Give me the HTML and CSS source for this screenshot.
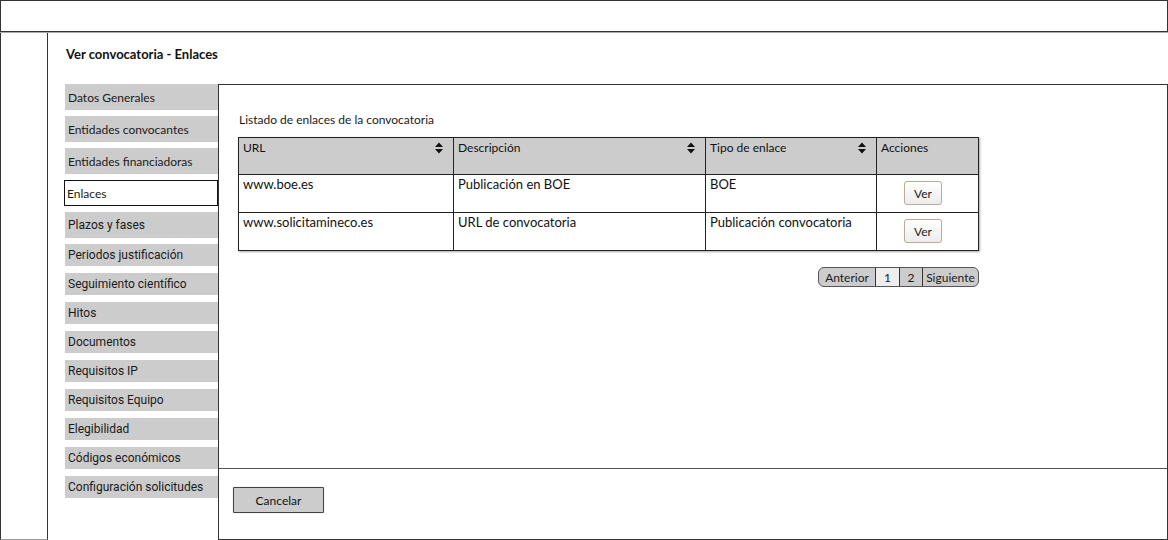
FILE: index.html
```html
<!DOCTYPE html>
<html lang="es">
<head>
<meta charset="utf-8">
<title>Ver convocatoria - Enlaces</title>
<link rel="stylesheet" href="styles.css">
</head>
<body>
<div class="topbar"></div>
<div class="shell">
  <div class="rail"></div>
  <div class="main">
    <div class="title">Ver convocatoria - Enlaces</div>
    <div class="workarea">
      <nav class="nav">
        <div class="nav-group tall">
          <div class="nav-item lato">Datos Generales</div>
          <div class="nav-item lato">Entidades convocantes</div>
          <div class="nav-item lato">Entidades financiadoras</div>
          <div class="nav-item lato active">Enlaces</div>
          <div class="nav-item">Plazos y fases</div>
        </div>
        <div class="nav-group short">
          <div class="nav-item">Periodos justificación</div>
          <div class="nav-item">Seguimiento científico</div>
          <div class="nav-item">Hitos</div>
          <div class="nav-item">Documentos</div>
          <div class="nav-item">Requisitos IP</div>
          <div class="nav-item">Requisitos Equipo</div>
          <div class="nav-item">Elegibilidad</div>
          <div class="nav-item">Códigos económicos</div>
          <div class="nav-item">Configuración solicitudes</div>
        </div>
      </nav>
      <section class="panel">
        <div class="panel-body">
          <div class="list-label">Listado de enlaces de la convocatoria</div>
          <table class="grid">
            <colgroup>
              <col class="c1"><col class="c2"><col class="c3"><col class="c4">
            </colgroup>
            <thead>
              <tr>
                <th><div class="th-in"><span>URL</span><svg class="sort" viewBox="0 0 10 12" width="10" height="12"><path d="M1 5 L5 0.5 L9 5 Z M1 7 L5 11.5 L9 7 Z"/></svg></div></th>
                <th><div class="th-in"><span>Descripción</span><svg class="sort" viewBox="0 0 10 12" width="10" height="12"><path d="M1 5 L5 0.5 L9 5 Z M1 7 L5 11.5 L9 7 Z"/></svg></div></th>
                <th><div class="th-in"><span>Tipo de enlace</span><svg class="sort" viewBox="0 0 10 12" width="10" height="12"><path d="M1 5 L5 0.5 L9 5 Z M1 7 L5 11.5 L9 7 Z"/></svg></div></th>
                <th><div class="th-in"><span>Acciones</span></div></th>
              </tr>
            </thead>
            <tbody>
              <tr>
                <td>www.boe.es</td>
                <td>Publicación en BOE</td>
                <td>BOE</td>
                <td class="act"><button class="ver">Ver</button></td>
              </tr>
              <tr>
                <td>www.solicitamineco.es</td>
                <td>URL de convocatoria</td>
                <td>Publicación convocatoria</td>
                <td class="act"><button class="ver">Ver</button></td>
              </tr>
            </tbody>
          </table>
          <div class="pager-row">
            <div class="pager">
              <span class="pg prev">Anterior</span>
              <span class="pg num current">1</span>
              <span class="pg num two">2</span>
              <span class="pg next">Siguiente</span>
            </div>
          </div>
        </div>
        <div class="panel-foot">
          <button class="cancel">Cancelar</button>
        </div>
      </section>
    </div>
  </div>
</div>
</body>
</html>
```
FILE: styles.css
```css
html, body {
  margin: 0;
  padding: 0;
  background: #fff;
}
body {
  width: 1168px;
  height: 540px;
  overflow: hidden;
  font-family: Lato, "Liberation Sans", sans-serif;
  color: #111;
}
.topbar {
  height: 32px;
  box-sizing: border-box;
  border: 1px solid #333;
}
.shell {
  display: flex;
  height: 508px;
  border-top: 1px solid #aaa;
  box-sizing: border-box;
}
.rail {
  width: 48px;
  box-sizing: border-box;
  border-left: 1px solid #333;
  border-right: 1px solid #333;
  border-bottom: 1px solid #999;
}
.main {
  flex: 1;
  display: flex;
  flex-direction: column;
  padding-left: 17px;
}
.title {
  font-weight: 700;
  font-size: 13px;
  line-height: 16px;
  padding-top: 13px;
  padding-left: 1px;
  color: #111;
}
.workarea {
  margin-top: 22px;
  display: flex;
  flex: 1;
}
.nav {
  width: 153px;
  display: flex;
  flex-direction: column;
  gap: 6px;
}
.nav-group {
  display: flex;
  flex-direction: column;
}
.nav-group.tall { gap: 6px; }
.nav-group.short { gap: 7px; }
.nav-item {
  background: #cccccc;
  display: flex;
  align-items: center;
  padding-left: 3px;
  font-family: Roboto, "Liberation Sans", sans-serif;
  font-size: 12px;
  color: #1a1a1a;
  box-sizing: border-box;
  white-space: nowrap;
}
.nav-item.lato {
  font-family: Lato, "Liberation Sans", sans-serif;
}
.tall .nav-item { height: 26px; }
.short .nav-item { height: 22px; }
.nav-item.active {
  background: #fff;
  border: 1px solid #111;
  margin-left: -1px;
  padding-left: 2px;
  width: 154px;
}
.panel {
  flex: 1;
  border: 1px solid #333;
  box-sizing: border-box;
  display: flex;
  flex-direction: column;
}
.panel-body {
  height: 384px;
  box-sizing: border-box;
  border-bottom: 1px solid #555;
  padding: 27px 0 0 19px;
}
.list-label {
  font-size: 12px;
  line-height: 15px;
  padding-left: 1px;
  color: #1a1a1a;
}
.grid {
  margin-top: 10px;
  border-collapse: collapse;
  width: 740px;
  table-layout: fixed;
  box-shadow: 1px 1px 2px rgba(0,0,0,0.35);
}
.c1 { width: 215px; }
.c2 { width: 252px; }
.c3 { width: 171px; }
.c4 { width: 102px; }
.grid th, .grid td {
  border: 1px solid #222;
  padding: 0;
  text-align: left;
  vertical-align: top;
}
.grid th {
  background: #cccccc;
  height: 36px;
  font-weight: 400;
  font-size: 12px;
  line-height: 15px;
}
.th-in {
  display: flex;
  justify-content: space-between;
  align-items: flex-start;
  padding: 2px 9px 0 4px;
}
.sort {
  margin-top: 2px;
  fill: #111;
}
.grid td {
  height: 38px;
  font-size: 13px;
  line-height: 16px;
  padding: 1px 0 0 4px;
  box-sizing: border-box;
}
.grid td.act {
  padding: 6px 0 0 27px;
}
.ver {
  width: 38px;
  height: 24px;
  border: 1px solid #b9ab95;
  border-radius: 3px;
  background: linear-gradient(#ffffff, #ececec);
  font-family: Lato, "Liberation Sans", sans-serif;
  font-size: 12px;
  color: #222;
  padding: 0;
  box-shadow: 0 0 1px rgba(0,0,0,0.15);
}
.pager-row {
  width: 741px;
  display: flex;
  justify-content: flex-end;
  margin-top: 16px;
}
.pager {
  display: flex;
  height: 20px;
  box-sizing: border-box;
  border: 1px solid #555;
  border-radius: 6px;
  overflow: hidden;
  background: #cccccc;
  font-size: 12px;
}
.pg {
  display: flex;
  align-items: center;
  justify-content: center;
  box-sizing: border-box;
  color: #1a1a1a;
}
.prev { width: 57px; border-right: 1px solid #333; }
.num { width: 24px; border-right: 1px solid #333; }
.num.two { width: 23px; }
.num.current { background: #eeeeee; }
.next { width: 55px; }
.panel-foot {
  flex: 1;
  padding: 18px 0 0 14px;
}
.cancel {
  width: 91px;
  height: 26px;
  background: #cccccc;
  border: 1px solid #444;
  border-radius: 1px;
  font-family: Lato, "Liberation Sans", sans-serif;
  font-size: 12px;
  color: #111;
  padding: 0;
  box-shadow: 0 0 1px rgba(0,0,0,0.4);
}
```
